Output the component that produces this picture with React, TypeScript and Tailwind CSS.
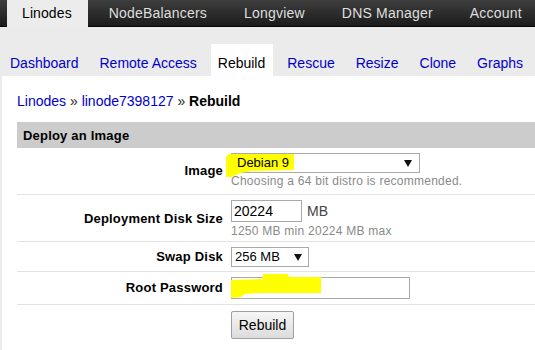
import React from "react";

const Arrow = () => (
  <svg width="8" height="7" viewBox="0 0 8 7" className="shrink-0">
    <polygon points="0,0 8,0 4,7" fill="#111" />
  </svg>
);

export default function App() {
  const nav = ["Linodes", "NodeBalancers", "Longview", "DNS Manager", "Account"];
  const sub = ["Dashboard", "Remote Access", "Rebuild", "Rescue", "Resize", "Clone", "Graphs"];
  return (
    <div className="w-[535px] h-[350px] overflow-hidden bg-[#ebebeb] font-['Liberation_Sans',Arial,sans-serif] text-black">
      {/* top nav */}
      <div className="flex h-[27px] bg-gradient-to-b from-[#3e3e3e] to-[#1b1b1b] shadow-[inset_0_-1px_0_#050505] pl-[7px] gap-[5px] whitespace-nowrap">
        {nav.map((n, i) => (
          <div
            key={n}
            className={
              i === 0
                ? "shrink-0 h-[27px] pl-[15px] pr-[16px] bg-[#ececec] text-[14px] leading-[26px] text-black tracking-[0.1px]"
                : "shrink-0 h-[26px] px-[16px] text-[14px] leading-[26px] text-[#dedede] tracking-[0.2px]"
            }
          >
            {n}
          </div>
        ))}
      </div>
      {/* sub tabs */}
      <div className="flex pt-[17px] pl-[3px] gap-[7px] whitespace-nowrap">
        {sub.map((s) => (
          <div
            key={s}
            className={
              s === "Rebuild"
                ? "shrink-0 h-[32px] pt-[11px] pl-[7px] pr-[8px] bg-white text-[14px] leading-[16px] text-black"
                : "shrink-0 h-[32px] pt-[11px] px-[7px] text-[14px] leading-[16px] text-[#0000cc]"
            }
          >
            {s}
          </div>
        ))}
      </div>
      {/* content */}
      <div className="ml-[2px] bg-white h-[274px] pl-[15px] pt-[17px]">
        <div className="text-[14px] leading-[16px] text-[#222]">
          <span className="text-[#0000cc]">Linodes</span> » <span className="text-[#0000cc]">linode7398127</span> »{" "}
          <span className="font-bold text-black">Rebuild</span>
        </div>
        <div className="mt-[13px] h-[26px] bg-[#cccccc] pl-[6px] flex items-center pt-[2px] text-[13px] font-bold tracking-[0.2px]">
          Deploy an Image
        </div>
        {/* Image row */}
        <div className="flex items-center pt-[5px] pb-[6px] border-b border-[#e3e3e3]">
          <div className="w-[206px] text-right text-[13px] font-bold tracking-[0.2px]">Image</div>
          <div className="pl-[8px]">
            <div className="relative w-[189px] h-[20px] border border-[#a9a9a9] bg-white flex items-center justify-between pl-[5px] pr-[7px]">
              <svg className="absolute left-[-6px] top-[-1px] overflow-visible" width="70" height="26">
                <polygon points="0,4 3,1 68,1 68,17 25,18 15,20 5,24 0,24" fill="#ffff00" />
              </svg>
              <span className="relative text-[13px] leading-[16px]">Debian 9</span>
              <span className="relative"><Arrow /></span>
            </div>
            <div className="mt-[1px] text-[12px] leading-[14px] text-[#8a8a8a] tracking-[0.25px]">Choosing a 64 bit distro is recommended.</div>
          </div>
        </div>
        {/* Disk size row */}
        <div className="flex items-center pt-[5px] pb-[3px] border-b border-[#e3e3e3]">
          <div className="w-[206px] text-right text-[13px] font-bold tracking-[0.2px]">Deployment Disk Size</div>
          <div className="pl-[8px]">
            <div className="flex items-center">
              <div className="w-[71px] h-[22px] border border-[#a9a9a9] pl-[2px] text-[14px] leading-[20px]">20224</div>
              <span className="ml-[5px] text-[14px] text-[#444]">MB</span>
            </div>
            <div className="mt-[2px] text-[12px] leading-[14px] text-[#8a8a8a] tracking-[0.25px]">1250 MB min 20224 MB max</div>
          </div>
        </div>
        {/* Swap row */}
        <div className="flex items-center pt-[5px] pb-[4px] border-b border-[#e3e3e3]">
          <div className="w-[206px] text-right text-[13px] font-bold tracking-[0.2px]">Swap Disk</div>
          <div className="pl-[8px]">
            <div className="w-[78px] h-[20px] border border-[#a9a9a9] bg-white flex items-center justify-between pl-[3px] pr-[6px]">
              <span className="text-[13px] leading-[16px]">256 MB</span>
              <Arrow />
            </div>
          </div>
        </div>
        {/* Root password row */}
        <div className="flex items-center pt-[5px] pb-[5px] border-b border-[#e3e3e3]">
          <div className="w-[206px] text-right text-[13px] font-bold tracking-[0.2px]">Root Password</div>
          <div className="pl-[8px]">
            <div className="relative w-[179px] h-[22px] border border-[#a9a9a9] bg-white">
              <svg className="absolute left-[-1px] top-[-1px] overflow-visible" width="92" height="22">
                <polygon points="0,3 32,2 32,-3 57,-3 58,0 90,0 90,16 31,16 14,17 10,20 0,21" fill="#ffff00" />
              </svg>
            </div>
          </div>
        </div>
        {/* Button row */}
        <div className="flex pt-[6px]">
          <div className="w-[206px]" />
          <div className="pl-[8px]">
            <div className="w-[63px] h-[28px] border border-[#a0a0a0] rounded-[2px] bg-gradient-to-b from-[#f6f6f6] to-[#dcdcdc] flex items-center justify-center text-[14px]">
              Rebuild
            </div>
          </div>
        </div>
      </div>
    </div>
  );
}
